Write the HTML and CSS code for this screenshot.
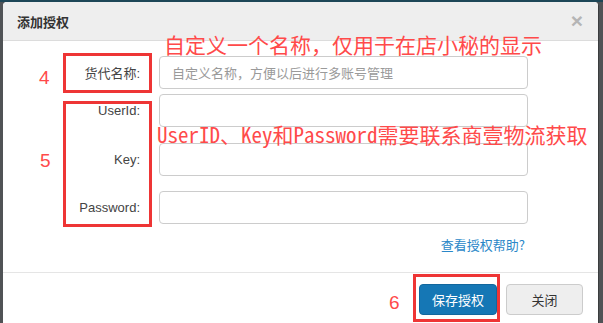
FILE: index.html
```html
<!DOCTYPE html>
<html lang="zh-CN">
  <head>
    <meta charset="UTF-8" />
    <meta name="viewport" content="width=device-width, initial-scale=1.0" />
    <title>添加授权</title>
    <link rel="stylesheet" href="styles.css">
  </head>
  <body>
    <div class="modal">
      <div class="modal-header">
        <h4>添加授权</h4>
        <span class="close">&times;</span>
      </div>

      <div class="modal-body">
        <div class="form-row row-tight">
          <label for="agentName">货代名称:</label>
          <input type="text" id="agentName" placeholder="自定义名称，方便以后进行多账号管理" />
        </div>
        <div class="form-row row-wide">
          <label for="userId">UserId:</label>
          <input type="text" id="userId" />
        </div>
        <div class="form-row row-mid">
          <label for="key">Key:</label>
          <input type="text" id="key" />
        </div>
        <div class="form-row">
          <label for="password">Password:</label>
          <input type="text" id="password" />
        </div>
        <div class="help">
          <a href="#">查看授权帮助?</a>
        </div>
      </div>

      <div class="modal-footer">
        <button class="btn btn-primary">保存授权</button>
        <button class="btn btn-default">关闭</button>
      </div>
    </div>

    <!-- annotations drawn over the screenshot -->
    <div class="mark mark-name"></div>
    <div class="mark mark-auth"></div>
    <div class="mark mark-save"></div>

    <div class="note note-1">自定义一个名称，仅用于在店小秘的显示</div>
    <div class="note note-2">UserID、Key和Password需要联系商壹物流获取</div>
    <div class="note num num-4">4</div>
    <div class="note num num-5">5</div>
    <div class="note num num-6">6</div>
  </body>
</html>
```

FILE: styles.css
```css
* {
  margin: 0;
  padding: 0;
  box-sizing: border-box;
}

body {
  position: relative;
  width: 603px;
  height: 323px;
  overflow: hidden;
  padding: 2px 4px 0 3px;
  background: linear-gradient(#1d4657 0, #1d4657 2px, #505356 2px);
  font-family: "Liberation Sans", "Noto Sans CJK SC", sans-serif;
  font-size: 13px;
  color: #333;
}

.modal {
  background: #fff;
  width: 596px;
  height: 330px;
  border-radius: 4px 4px 0 0;
  border-right: 1px solid #3a3c3e;
}

.modal-header {
  display: flex;
  justify-content: space-between;
  align-items: center;
  height: 39px;
  padding: 0 15px 0 14px;
  background: #eee;
  border-bottom: 1px solid #dcdcdc;
  border-radius: 4px 4px 0 0;
}

.modal-header h4 {
  font-size: 13px;
  font-weight: bold;
  color: #333;
  font-family: "Noto Sans CJK SC", sans-serif;
}

.close {
  font-size: 21px;
  font-weight: bold;
  color: #b5b5b5;
  line-height: 1;
  margin-top: -2px;
}

.modal-body {
  padding: 15px 0 17px 0;
  border-bottom: 1px solid #e5e5e5;
}

.form-row {
  display: grid;
  grid-template-columns: 137px 369px;
  column-gap: 19px;
  align-items: center;
}

.row-tight {
  margin-bottom: 5px;
}

.row-wide {
  margin-bottom: 16px;
}

.row-mid {
  margin-bottom: 15px;
}

.form-row label {
  text-align: right;
  color: #444;
}

.form-row input {
  height: 33px;
  border: 1px solid #ccc;
  border-radius: 4px;
  padding: 0 12px;
  font-family: "Noto Sans CJK SC", sans-serif;
  font-size: 13px;
  color: #555;
}

.form-row input::placeholder {
  color: #9a9a9a;
}

.help {
  width: 522px;
  margin-top: 12px;
  text-align: right;
  line-height: 18px;
}

.help a {
  color: #2a87c8;
  text-decoration: none;
  font-family: "Noto Sans CJK SC", sans-serif;
}

.modal-footer {
  display: flex;
  justify-content: flex-end;
  gap: 9px;
  padding: 11px 15px 0 0;
}

.btn {
  height: 31px;
  border-radius: 4px;
  font-family: "Noto Sans CJK SC", sans-serif;
  font-size: 13px;
  cursor: pointer;
}

.btn-primary {
  width: 78px;
  background: #1577b5;
  border: 1px solid #12679d;
  color: #fff;
}

.btn-default {
  width: 77px;
  background: #eee;
  border: 1px solid #ccc;
  color: #333;
}

/* red annotation marks */
.mark {
  position: absolute;
  border: 3px solid #ee3535;
}

.mark-name {
  left: 63px;
  top: 53px;
  width: 89px;
  height: 40px;
}

.mark-auth {
  left: 63px;
  top: 101px;
  width: 89px;
  height: 126px;
}

.mark-save {
  left: 413px;
  top: 274px;
  width: 87px;
  height: 48px;
}

.note {
  position: absolute;
  color: #ff4a4a;
  font-family: "Noto Sans Mono CJK SC", "Noto Sans CJK SC", sans-serif;
  font-weight: 300;
  font-size: 21px;
  line-height: 24px;
  white-space: nowrap;
}

.note-1 {
  left: 164px;
  top: 32px;
}

.note-2 {
  left: 157px;
  top: 122px;
}

.num {
  font-family: "Liberation Sans", sans-serif;
  font-size: 19px;
}

.num-4 {
  left: 39px;
  top: 66px;
}

.num-5 {
  left: 40px;
  top: 149px;
}

.num-6 {
  left: 389px;
  top: 291px;
}
```
